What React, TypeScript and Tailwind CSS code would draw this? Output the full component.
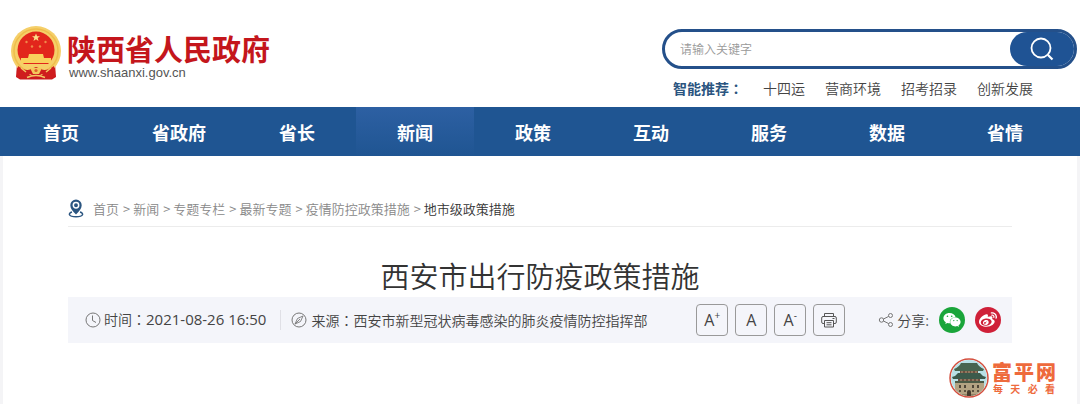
import { useState } from "react";
import { FaWeibo, FaWeixin } from "react-icons/fa";

const navItems = ["首页", "省政府", "省长", "新闻", "政策", "互动", "服务", "数据", "省情"];
const hotWords = ["十四运", "营商环境", "招考招录", "创新发展"];
const crumbs = ["首页", "新闻", "专题专栏", "最新专题", "疫情防控政策措施"];

function Emblem() {
    return (
        <svg viewBox="0 0 52 54" className="h-[54px] w-[52px]" aria-hidden="true">
            <path d="M7 38 L15 35 H37 L45 38 L46 51 L42 53.500 H10 L6 51 Z" fill="#cb1a1e" />
            <circle cx="26" cy="25" r="25" fill="#f5cf69" />
            <circle cx="26" cy="25" r="22" fill="none" stroke="#efbd4c" strokeWidth="1.500" />
            <circle cx="26" cy="24" r="18.500" fill="#e2261c" />
            <path d="M26 7.500 l1.100 2.700 2.900.1-2.300 1.800.8 2.800-2.500-1.600-2.500 1.600.8-2.800-2.300-1.800 2.900-.1z" fill="#fbe08a" />
            <g fill="#f08a4a">
                <circle cx="16.500" cy="16" r="1.200" />
                <circle cx="35.500" cy="16" r="1.200" />
                <circle cx="22" cy="20.500" r="1.200" />
                <circle cx="30" cy="20.500" r="1.200" />
            </g>
            <path d="M19 28 h14 l1 4 h7 v5 H11 v-5 h7z" fill="#f9d15c" />
            <path d="M11 38 h30 l-5 5 h-20z" fill="#f6cf68" />
            <path d="M8 40 q8 6 13 3 l5-2 5 2 q5 3 13-3 l1 11 q-8 3-13-3 l-6 3-6-3 q-5 6-13 3z" fill="#cf1c1e" />
            <path d="M20 42 h12 l-3 6 h-6z" fill="#f4c95b" />
            <circle cx="26" cy="44.500" r="1.600" fill="#e0612c" />
            <path d="M11 42 l5 4 M41 42 l-5 4 M17 51.500 q9-4 18 0" stroke="#f3c765" strokeWidth="1.500" fill="none" />
        </svg>
    );
}

function PinIcon() {
    return (
        <svg viewBox="0 0 16 19" className="h-[19px] w-4" fill="none" stroke="#2b5580" aria-hidden="true">
            <path d="M8 15.500 C4.500 12 2.300 9.500 2.300 6.200 a5.700 5.700 0 0 1 11.400 0 C13.700 9.500 11.500 12 8 15.500z" fill="#2b5580" stroke="none" />
            <circle cx="8" cy="6.200" r="2.700" stroke="#fff" strokeWidth="1.500" />
            <path d="M4 13 C0 14 0 17.800 8 17.800 S16 14 12 13" strokeWidth="1.500" />
        </svg>
    );
}

function ClockIcon() {
    return (
        <svg viewBox="0 0 16 16" className="size-4" fill="none" stroke="#777" aria-hidden="true">
            <circle cx="8" cy="8" r="7" />
            <path d="M7.500 3.500 V8.500 L11 10.500" />
        </svg>
    );
}

function CompassIcon() {
    return (
        <svg viewBox="0 0 16 16" className="size-4" fill="none" stroke="#777" aria-hidden="true">
            <circle cx="8" cy="8" r="7" />
            <path d="M12 4 L9.500 9.500 4 12 6.500 6.500z M4 12 L9 7" strokeWidth=".9" />
        </svg>
    );
}

function PrintIcon() {
    return (
        <svg viewBox="0 0 16 16" className="size-4" fill="none" stroke="#555" aria-hidden="true">
            <path d="M3.500 4.500 V1.500 H12.500 V4.500" />
            <path d="M3.500 11.500 H2 Q.7 11.500 .7 10 V6 Q.7 4.500 2 4.500 H14 Q15.300 4.500 15.300 6 V10 Q15.300 11.500 14 11.500 H12.500" />
            <path d="M3.500 8.500 H12.500 V15 H3.500z M5.500 10.700 H10.500 M5.500 12.800 H10.500" />
            <path d="M11.500 6.500 H13.500" />
        </svg>
    );
}

function ShareIcon() {
    return (
        <svg viewBox="0 0 16 16" className="size-4" fill="none" stroke="#777" aria-hidden="true">
            <circle cx="3.500" cy="8" r="2.200" />
            <circle cx="12.500" cy="3.500" r="2" />
            <circle cx="12.500" cy="12.500" r="2" />
            <path d="M5.500 7 L10.700 4.400 M5.500 9 L10.700 11.600" />
        </svg>
    );
}

function TowerLogo() {
    return (
        <svg viewBox="0 0 40 40" className="size-10" aria-hidden="true">
            <clipPath id="tower">
                <circle cx="20" cy="20" r="18" />
            </clipPath>
            <circle cx="20" cy="20" r="19" fill="#fff" stroke="#d4503f" strokeWidth="1.500" />
            <g clipPath="url(#tower)">
                <path d="M0 0h40v40H0z" fill="#b8e1e6" />
                <path d="M6 23h29v17H6z" fill="#b3a382" />
                <path d="M4 36h32v4H4z" fill="#8e8165" />
                <path d="M11 11h18v5H11z M9 18h22v5H9z" fill="#6d5040" />
                <path d="M12 5 h16 q2 4 7 6 l-1 2 H6 L5 11 q5-2 7-6z" fill="#47654f" />
                <path d="M9 15 h22 q2 3 6 4 l-1 2 H4 L3 19 q4-1 6-4z" fill="#3c5a4b" />
                <path d="M6 23h29v2H6z" fill="#4b5a45" />
                <path d="M10 27h2v3h-2z M15 27h2v3h-2z M23 27h2v3h-2z M28 27h2v3h-2z" fill="#4f4637" />
                <path d="M10 32h2v2h-2z M15 32h2v2h-2z M23 32h2v2h-2z M28 32h2v2h-2z" fill="#5d5341" />
                <path d="M18 38v-4a2 2 0 0 1 4 0v4z" fill="#463b2e" />
                <path d="M13 13v2 M17 13v2 M20 13v2 M23 13v2 M27 13v2 M12 21v2 M16 21v2 M20 21v2 M24 21v2 M28 21v2" stroke="#c9b48e" strokeWidth=".8" />
            </g>
        </svg>
    );
}

// full-width colon, centred in its box
function Colon() {
    return <span className="font-['Noto_Sans_CJK_TC',sans-serif]" lang="zh-TW">：</span>;
}

const toolButton = "flex h-8 w-8 items-center justify-center rounded-sm border border-[#999] text-[#444]";

export default function App() {
    const [keyword, setKeyword] = useState("");

    return (
        <div className="bg-[#f4f4f6] font-['Noto_Sans_CJK_SC',sans-serif] text-sm font-[350] text-[#444]">
            <header className="bg-white">
                <div className="flex items-start justify-between pr-[3px] pl-[10px]">
                    <a href="#" className="flex items-start gap-[5px] pt-[26px]">
                        <Emblem />
                        <span className="flex flex-col pt-[5px]">
                            <span className="text-[29px] leading-[34px] font-bold text-[#c4161c]">陕西省人民政府</span>
                            <span className="pl-[2px] font-['Liberation_Sans',sans-serif] text-[13px] leading-4 text-[#555]">www.shaanxi.gov.cn</span>
                        </span>
                    </a>

                    <div className="w-[415px] pt-[29px] pb-2">
                        <form
                            className="flex h-10 items-stretch rounded-full border-[3px] border-[#24508a] bg-white"
                            onSubmit={(e) => e.preventDefault()}
                        >
                            <input
                                type="text"
                                aria-label="请输入关键字"
                                placeholder="请输入关键字"
                                value={keyword}
                                onChange={(e) => setKeyword(e.target.value)}
                                className="min-w-0 flex-1 bg-transparent pl-[15px] text-xs outline-none placeholder:text-[#999]"
                            />
                            <button type="submit" aria-label="搜索" className="flex w-16 items-center justify-center rounded-full bg-[#1f5394]">
                                <svg viewBox="0 0 24 24" className="size-6" fill="none" stroke="#fff" strokeWidth="1.800" aria-hidden="true">
                                    <circle cx="11" cy="11" r="9.500" />
                                    <path d="M18 18 L22.500 22.500" strokeWidth="2.200" />
                                </svg>
                            </button>
                        </form>
                        <div className="mt-2 flex gap-5 pl-[11px] leading-[22px]">
                            <span className="font-bold text-[#2b5580]">智能推荐<Colon /></span>
                            {hotWords.map((word) => (
                                <a key={word} href="#" className="hover:underline">{word}</a>
                            ))}
                        </div>
                    </div>
                </div>

                <nav className="flex h-[49px] bg-[#1f5592] pr-4 pl-[2px]">
                    {navItems.map((item) => (
                        <a
                            key={item}
                            href="#"
                            className={`flex flex-1 items-center justify-center text-lg font-bold text-white ${
                                item === "新闻" ? "bg-linear-to-b from-[#2d60a3] to-[#1f5592]" : ""
                            }`}
                        >
                            {item}
                        </a>
                    ))}
                </nav>
            </header>

            <main className="mx-[3px] bg-white px-[65px] pt-[42px] pb-[6px]">
                {/* Breadcrumb */}
                <div className="flex items-center gap-[9px] border-b border-[#ececec] pb-[7px]">
                    <PinIcon />
                    <div className="flex gap-[3px] text-[13px] leading-[21px] text-[#888]">
                        {crumbs.map((crumb) => (
                            <span key={crumb} className="flex gap-1">
                                <a href="#">{crumb}</a>
                                <span>&gt;</span>
                            </span>
                        ))}
                        <span className="text-[#333]">地市级政策措施</span>
                    </div>
                </div>

                <h1 className="pt-7 pb-px text-center text-[29px] leading-[41px] font-[350] text-[#333]">西安市出行防疫政策措施</h1>

                {/* Meta bar */}
                <div className="flex h-[46px] items-center bg-[#f4f5fa] pr-[11px] pl-[17px]">
                    <div className="flex items-center gap-[3px]">
                        <ClockIcon />
                        <span>
                            时间<Colon />
                            <span className="font-['Open_Sans',sans-serif] text-[15px] font-normal">2021-08-26 16:50</span>
                        </span>
                    </div>
                    <div className="ml-[14px] flex items-center gap-1 border-l border-[#e0e0e6] pl-[10px]">
                        <CompassIcon />
                        <span>来源<Colon />西安市新型冠状病毒感染的肺炎疫情防控指挥部</span>
                    </div>

                    <div className="ml-auto flex gap-[7px] font-['Open_Sans',sans-serif] text-base font-normal">
                        <button type="button" aria-label="放大字号" className={toolButton}>
                            A<sup className="text-[10px]">+</sup>
                        </button>
                        <button type="button" aria-label="默认字号" className={toolButton}>A</button>
                        <button type="button" aria-label="缩小字号" className={toolButton}>
                            A<sup className="text-[10px]">-</sup>
                        </button>
                        <button type="button" aria-label="打印" className={toolButton}>
                            <PrintIcon />
                        </button>
                    </div>
                    <div className="ml-[33px] flex items-center gap-[10px]">
                        <span className="flex items-center gap-[3px]">
                            <ShareIcon />
                            分享:
                        </span>
                        <a href="#" aria-label="微信" className="flex size-[26px] items-center justify-center rounded-full bg-[#1aa53a] text-white">
                            <FaWeixin size={18} />
                        </a>
                        <a href="#" aria-label="微博" className="flex size-[26px] items-center justify-center rounded-full bg-[#cf2038] text-white">
                            <FaWeibo size={18} />
                        </a>
                    </div>
                </div>

                <div className="-mr-11 mt-[15px] flex items-center justify-end gap-[3px] text-[#ee6a3c]">
                    <TowerLogo />
                    <div className="w-16">
                        <div className="flex justify-between text-xl leading-[22px] font-black">
                            <span>富</span>
                            <span>平</span>
                            <span>网</span>
                        </div>
                        <div className="flex justify-between px-px text-[10px] leading-3 font-bold">
                            <span>每</span>
                            <span>天</span>
                            <span>必</span>
                            <span>看</span>
                        </div>
                    </div>
                </div>
            </main>
        </div>
    );
}
